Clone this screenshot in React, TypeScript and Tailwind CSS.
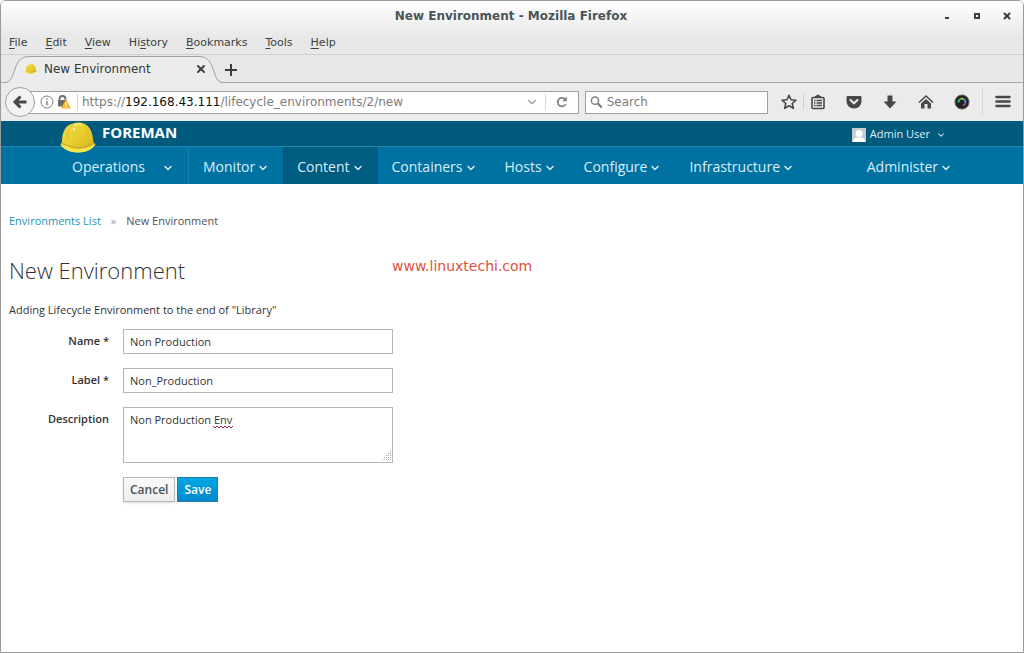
import * as React from 'react';
import { ChevronDown, X } from 'lucide-react';

const menus = ['File', 'Edit', 'View', 'History', 'Bookmarks', 'Tools', 'Help'];
// letter that carries the keyboard mnemonic in each menu
const mnemonics: Record<string, number> = { History: 2 };

const navItems = ['Monitor', 'Content', 'Containers', 'Hosts', 'Configure', 'Infrastructure'];

const HelmetIcon: React.FC<{ className?: string }> = ({ className }) => (
  <svg viewBox="0 0 36 31" className={className} aria-hidden="true">
    <defs>
      <linearGradient id="helmet" x1="0" y1="0" x2="1" y2="1">
        <stop offset="0" stopColor="#f0de4c" />
        <stop offset="0.5" stopColor="#e8cd2c" />
        <stop offset="1" stopColor="#cfae1c" />
      </linearGradient>
    </defs>
    <path
      d="M2 20C2 9 6 3 13 1.500C16 0 21 0 24 1.500C30 4 33 11 33.500 20.500L35.500 22C33 27 26 30.500 18 30.500S3 27 0.500 22.500Z"
      fill="url(#helmet)"
    />
    <path
      d="M0.500 22.500C5 23 11 26.500 18 27C25 27 31 24 35.500 22C33 27 26 30.500 18 30.500S3 27 0.500 22.500Z"
      fill="#f5e650"
    />
    <path d="M2 21.500C8 23.500 12 25.500 18 26C25 26 30 23 34 21" fill="none" stroke="#bd9a18" strokeWidth="0.800" />
    <path d="M13 2C8 7 7 13 7.500 18M23 2C28 6 29 12 29 18" fill="none" stroke="#d8bb24" strokeWidth="0.800" />
    <path d="M14 3C17 2 20 2 22 3" fill="none" stroke="#f8ee8c" strokeWidth="1.500" />
    <circle cx="14" cy="7" r="1.200" fill="#faf3b0" />
  </svg>
);

const Caret: React.FC = () => <ChevronDown className="mt-0.5 size-3 shrink-0" strokeWidth={3} />;

const TitleBar: React.FC = () => (
  <div className="flex h-[31px] items-center pb-0.5 pl-20 pr-2.5 text-[#4a5557]">
    <h1 className="flex-1 text-center text-xs font-bold">New Environment - Mozilla Firefox</h1>
    <div className="flex w-[72px] items-center justify-between">
      <button aria-label="Minimize" className="flex h-3 w-3 items-center justify-center">
        <span className="mt-1 h-0.5 w-1 bg-[#3c4143]" />
      </button>
      <button aria-label="Maximize" className="flex h-3 w-3 items-center justify-center">
        <span className="size-1.5 border-2 border-[#3c4143]" />
      </button>
      <button aria-label="Close" className="flex h-3 w-3 items-center justify-center">
        <X className="size-2.5 text-[#3c4143]" strokeWidth={5} />
      </button>
    </div>
  </div>
);

const MenuBar: React.FC = () => (
  <div className="flex h-[23px] items-center gap-[18px] border-b border-[#cfcfcf] pl-2 text-[11px] text-[#3a3f41]">
    {menus.map((m) => {
      const i = mnemonics[m] ?? 0;
      return (
        <button key={m}>
          {m.slice(0, i)}
          <span className="underline underline-offset-2">{m[i]}</span>
          {m.slice(i + 1)}
        </button>
      );
    })}
  </div>
);

const TabStrip: React.FC = () => (
  <div className="flex h-7 text-xs text-[#33383a]">
    <div className="w-1 border-b border-[#a9a9a9]" />
    <div className="relative flex w-[218px] items-center pl-5 pr-4">
      <svg className="absolute inset-0 h-7 w-[218px]" viewBox="0 0 218 28" fill="none" aria-hidden="true">
        <path
          d="M0 27.500C12 27.500 6 1.500 24 1.500H194C212 1.500 206 27.500 218 27.500"
          fill="#ececec"
          stroke="#9d9d9d"
        />
      </svg>
      <HelmetIcon className="relative mr-[7px] h-2.5 w-3" />
      <span className="relative flex-1">New Environment</span>
      <button aria-label="Close tab" className="relative">
        <X className="size-3 text-[#404040]" strokeWidth={4} />
      </button>
    </div>
    <div className="flex flex-1 items-center border-b border-[#a9a9a9] pl-0.5 pt-0.5">
      <button aria-label="New tab">
        <svg className="size-3" viewBox="0 0 12 12" stroke="#3c3c3c" strokeWidth="2" aria-hidden="true">
          <path d="M6 0V12M0 6H12" />
        </svg>
      </button>
    </div>
  </div>
);

const AddressBar: React.FC = () => (
  <div className="flex h-[38px] items-center bg-[#ebebeb] pl-1 pr-3">
    <button
      aria-label="Back"
      className="relative z-10 flex size-[30px] shrink-0 items-center justify-center rounded-full border border-[#9f9f9f] bg-[#f3f3f3]"
    >
      <svg className="size-4" viewBox="0 0 16 16" fill="none" stroke="#474747" strokeWidth="3" aria-hidden="true">
        <path d="M8.500 2.500L3 8L8.500 13.500M3.500 8H14.500" />
      </svg>
    </button>
    <div className="-ml-2 flex h-[23px] flex-1 items-center border border-[#a0a0a0] bg-white pl-3 text-xs">
      <svg className="size-3.5 shrink-0" viewBox="0 0 14 14" fill="none" stroke="#808080" aria-hidden="true">
        <circle cx="7" cy="7" r="6" />
        <path d="M7 6V10.500M7 3.500V5" strokeWidth="1.400" />
      </svg>
      <svg className="ml-[3px] h-3.5 w-3.5 shrink-0" viewBox="0 0 14 14" aria-hidden="true">
        <path d="M2.500 6V4A3 3 0 0 1 8.500 4V6" fill="none" stroke="#6b6b6b" strokeWidth="1.800" />
        <rect x="1" y="5" width="8" height="6.500" rx="0.800" fill="#6b6b6b" />
        <path d="M9 4L14 13.500H4Z" fill="#f8b62b" />
        <path d="M9 7.500V10.500M9 11.300V12.500" stroke="#fff" strokeWidth="1.200" />
      </svg>
      <div className="ml-1.5 h-4 w-px bg-[#d5d5d5]" />
      <div className="ml-1 flex-1 text-[#7c7c7c]">
        https://<span className="text-[#111]">192.168.43.111</span>/lifecycle_environments/2/new
      </div>
      <button aria-label="Show history">
        <ChevronDown className="size-3.5 text-[#999]" strokeWidth={2} />
      </button>
      <div className="ml-1.5 h-4 w-px bg-[#d5d5d5]" />
      <button aria-label="Reload" className="px-2.5">
        <svg className="size-3" viewBox="0 0 12 12" fill="none" stroke="#808080" strokeWidth="1.700" aria-hidden="true">
          <path d="M9.800 8A4.300 4.300 0 1 1 9.500 3.700" />
          <path d="M10.800 0.500V5.200H6.200Z" fill="#808080" stroke="none" />
        </svg>
      </button>
    </div>
    <label className="ml-1.5 flex h-[23px] w-[183px] items-center gap-1 border border-[#a0a0a0] bg-white pl-1 text-xs">
      <svg className="size-3.5" viewBox="0 0 14 14" fill="none" stroke="#808080" aria-hidden="true">
        <circle cx="5.500" cy="5.500" r="4" strokeWidth="1.600" />
        <path d="M8.500 8.500L13 13" strokeWidth="2.400" />
      </svg>
      <input
        type="text"
        aria-label="Search"
        placeholder="Search"
        className="w-full min-w-0 outline-none placeholder:text-[#7c7c7c]"
      />
    </label>
    <div className="ml-[13px] flex items-center text-[#484848]">
      <button aria-label="Bookmark this page">
        <svg className="size-4" viewBox="0 0 16 16" fill="none" stroke="currentColor" strokeWidth="1.600" aria-hidden="true">
          <path d="M8 1.200L10 5.800L15 6.200L11.200 9.500L12.400 14.400L8 11.800L3.600 14.400L4.800 9.500L1 6.200L6 5.800Z" strokeLinejoin="round" />
        </svg>
      </button>
      <div className="ml-1.5 h-4 w-px bg-[#cfcfcf]" />
      <div className="ml-1.5 flex gap-5">
        <button aria-label="Bookmarks">
          <svg className="size-4" viewBox="0 0 16 16" fill="none" stroke="currentColor" aria-hidden="true">
            <rect x="2" y="3.500" width="12" height="11" rx="1" strokeWidth="1.600" />
            <path d="M5 3L8 0.800L11 3Z" fill="currentColor" />
            <path d="M4 6.500H5.500M6.500 6.500H12M4 9H5.500M6.500 9H12M4 11.500H5.500M6.500 11.500H12" strokeWidth="1.300" />
          </svg>
        </button>
        <button aria-label="Save to Pocket">
          <svg className="size-4" viewBox="0 0 16 16" aria-hidden="true">
            <path d="M1.500 2H14.500Q15.500 2 15.500 3V7.500A7.500 7 0 0 1 0.500 7.500V3Q0.500 2 1.500 2Z" fill="currentColor" />
            <path d="M4.500 6L8 9.300L11.500 6" fill="none" stroke="#ebebeb" strokeWidth="2" strokeLinecap="round" />
          </svg>
        </button>
        <button aria-label="Downloads">
          <svg className="size-4" viewBox="0 0 16 16" fill="currentColor" aria-hidden="true">
            <path d="M5.500 1.500H10.500V7.500H14.500L8 14.500L1.500 7.500H5.500Z" />
          </svg>
        </button>
        <button aria-label="Home">
          <svg className="size-4" viewBox="0 0 16 16" aria-hidden="true">
            <path d="M1 8.500L8 2L15 8.500" fill="none" stroke="currentColor" strokeWidth="1.600" />
            <path d="M3 9.500L8 5L13 9.500V14.500H9.500V10H6.500V14.500H3Z" fill="currentColor" />
          </svg>
        </button>
        <button aria-label="Screenshot add-on">
          <svg className="size-4" viewBox="0 0 16 16" fill="none" aria-hidden="true">
            <circle cx="8" cy="8" r="7" fill="#222" stroke="#555" />
            <path d="M4.500 8.500A3.500 3.500 0 0 1 6.500 5" stroke="#2bd06a" strokeWidth="1.800" />
            <path d="M6.500 5A3.500 3.500 0 0 1 9.500 5" stroke="#d9c83a" strokeWidth="1.800" />
            <path d="M9.500 5A3.500 3.500 0 0 1 11.500 8" stroke="#38a8e0" strokeWidth="1.800" />
            <path d="M11.500 8A3.500 3.500 0 0 1 9 11.300" stroke="#b03fc0" strokeWidth="1.800" />
          </svg>
        </button>
      </div>
      <div className="ml-3 h-7 w-px bg-[#d8d8d8]" />
      <button aria-label="Open menu" className="ml-3">
        <svg className="size-4" viewBox="0 0 16 16" stroke="currentColor" strokeWidth="2.600" strokeLinecap="round" aria-hidden="true">
          <path d="M1.500 3H14.500M1.500 7.500H14.500M1.500 12H14.500" />
        </svg>
      </button>
    </div>
  </div>
);

const ForemanHeader: React.FC = () => (
  <header className="font-['Open_Sans',sans-serif] text-[#d9eef7]">
    <div className="flex h-[25px] items-center bg-[#005a7d] px-[57px]">
      <div className="relative w-11">
        <HelmetIcon className="absolute -top-3 left-0.5 h-[31px] w-9" />
      </div>
      <span className="pb-1 text-[15px] leading-5 font-bold text-white">FOREMAN</span>
      <button className="ml-auto flex items-center pr-5 pt-0.5 text-[11px]">
        <svg className="mr-1 size-3.5" viewBox="0 0 14 14" aria-hidden="true">
          <rect width="14" height="14" fill="#c4ccd0" />
          <circle cx="7" cy="5.500" r="3.500" fill="#fff" />
          <path d="M1 14Q1 9.500 5 9.500H9Q13 9.500 13 14Z" fill="#fff" />
        </svg>
        <span className="mr-1.5">Admin User</span>
        <ChevronDown className="size-2.5" strokeWidth={2.5} />
      </button>
    </div>
    <nav className="flex h-[38px] border-t border-[#2487b0] bg-[#0072a2] px-[57px] text-sm">
      <button className="flex w-[131px] items-center justify-between border-r border-[#1a81ad] px-3.5 pt-0.5">
        Operations
        <Caret />
      </button>
      {navItems.map((item) => (
        <button
          key={item}
          className={`flex items-center gap-0.5 px-3.5 pt-0.5 ${item === 'Content' ? 'bg-[#005c80]' : ''}`}
        >
          {item}
          <Caret />
        </button>
      ))}
      <button className="ml-auto flex items-center gap-0.5 px-3.5 pt-0.5">
        Administer
        <Caret />
      </button>
    </nav>
  </header>
);

const EnvironmentForm: React.FC = () => {
  const [name, setName] = React.useState('Non Production');
  const [label, setLabel] = React.useState('Non_Production');
  const [description, setDescription] = React.useState('Non Production Env');

  return (
    <form
      onSubmit={(e) => e.preventDefault()}
      className="mt-[11px] grid grid-cols-[100px_270px] gap-x-3.5 gap-y-3.5"
    >
      <label htmlFor="name" className="pt-1 text-right font-semibold">
        Name *
      </label>
      <input
        id="name"
        value={name}
        onChange={(e) => setName(e.target.value)}
        className="h-[25px] border border-[#b6b6b6] px-1.5"
      />
      <label htmlFor="label" className="pt-1 text-right font-semibold">
        Label *
      </label>
      <input
        id="label"
        value={label}
        onChange={(e) => setLabel(e.target.value)}
        className="h-[25px] border border-[#b6b6b6] px-1.5"
      />
      <label htmlFor="description" className="pt-1 text-right font-semibold">
        Description
      </label>
      <div className="relative h-14">
        <textarea
          id="description"
          value={description}
          spellCheck={false}
          onChange={(e) => setDescription(e.target.value)}
          className="block h-14 w-full resize-none border border-[#b6b6b6] px-1.5 pt-1"
        />
        {/* spelling mark under "Env" */}
        <svg className="absolute top-[18px] left-[90px] h-1 w-5" viewBox="0 0 20 4" fill="none" stroke="#a03050" aria-hidden="true">
          <path d="M0 1L2 3L4 1L6 3L8 1L10 3L12 1L14 3L16 1L18 3L20 1" />
        </svg>
        {/* resize grip */}
        <svg className="absolute right-0.5 bottom-0.5 size-2.5" viewBox="0 0 10 10" fill="none" stroke="#a8a8a8" strokeDasharray="1 1" aria-hidden="true">
          <path d="M9.500 0V10M7.500 2V10M5.500 4V10M3.500 6V10M1.500 8V10" />
        </svg>
      </div>
      <div className="col-start-2 flex gap-0.5 text-xs font-semibold">
        <button
          type="button"
          className="h-[25px] border border-[#b7b7b7] bg-linear-to-b from-[#fafafa] to-[#ededed] px-1.5 text-[#4d5258] shadow-sm"
        >
          Cancel
        </button>
        <button
          type="submit"
          className="h-[25px] border border-[#267da1] bg-linear-to-b from-[#00a8e1] to-[#0088ce] px-1.5 text-white"
        >
          Save
        </button>
      </div>
    </form>
  );
};

export default function App() {
  return (
    <div className="flex min-h-screen flex-col overflow-hidden rounded-t-md border border-[#9a9a9a] bg-white font-['DejaVu_Sans',sans-serif]">
      <div className="bg-[#e8e8e8] bg-linear-to-b from-white from-0% to-[#e8e8e8] to-30%">
        <TitleBar />
        <MenuBar />
        <TabStrip />
        <AddressBar />
      </div>
      <ForemanHeader />
      <main className="flex-1 px-2 pt-[29px] font-['Open_Sans',sans-serif] text-[11px] leading-4 text-[#333]">
        <div className="flex items-center gap-2.5 text-[#4d5258]">
          <a href="#environments" className="text-[#1b94b8]">
            Environments List
          </a>
          <span className="text-[#9c9c9c]">»</span>
          <span>New Environment</span>
        </div>
        <div className="mt-[25px] flex items-start">
          <h2 className="w-[383px] text-[22px] leading-8 font-light">New Environment</h2>
          <span className="font-['DejaVu_Sans',sans-serif] text-sm leading-6 text-[#e0503c]">www.linuxtechi.com</span>
        </div>
        <p className="mt-4">Adding Lifecycle Environment to the end of "Library"</p>
        <EnvironmentForm />
      </main>
    </div>
  );
}
